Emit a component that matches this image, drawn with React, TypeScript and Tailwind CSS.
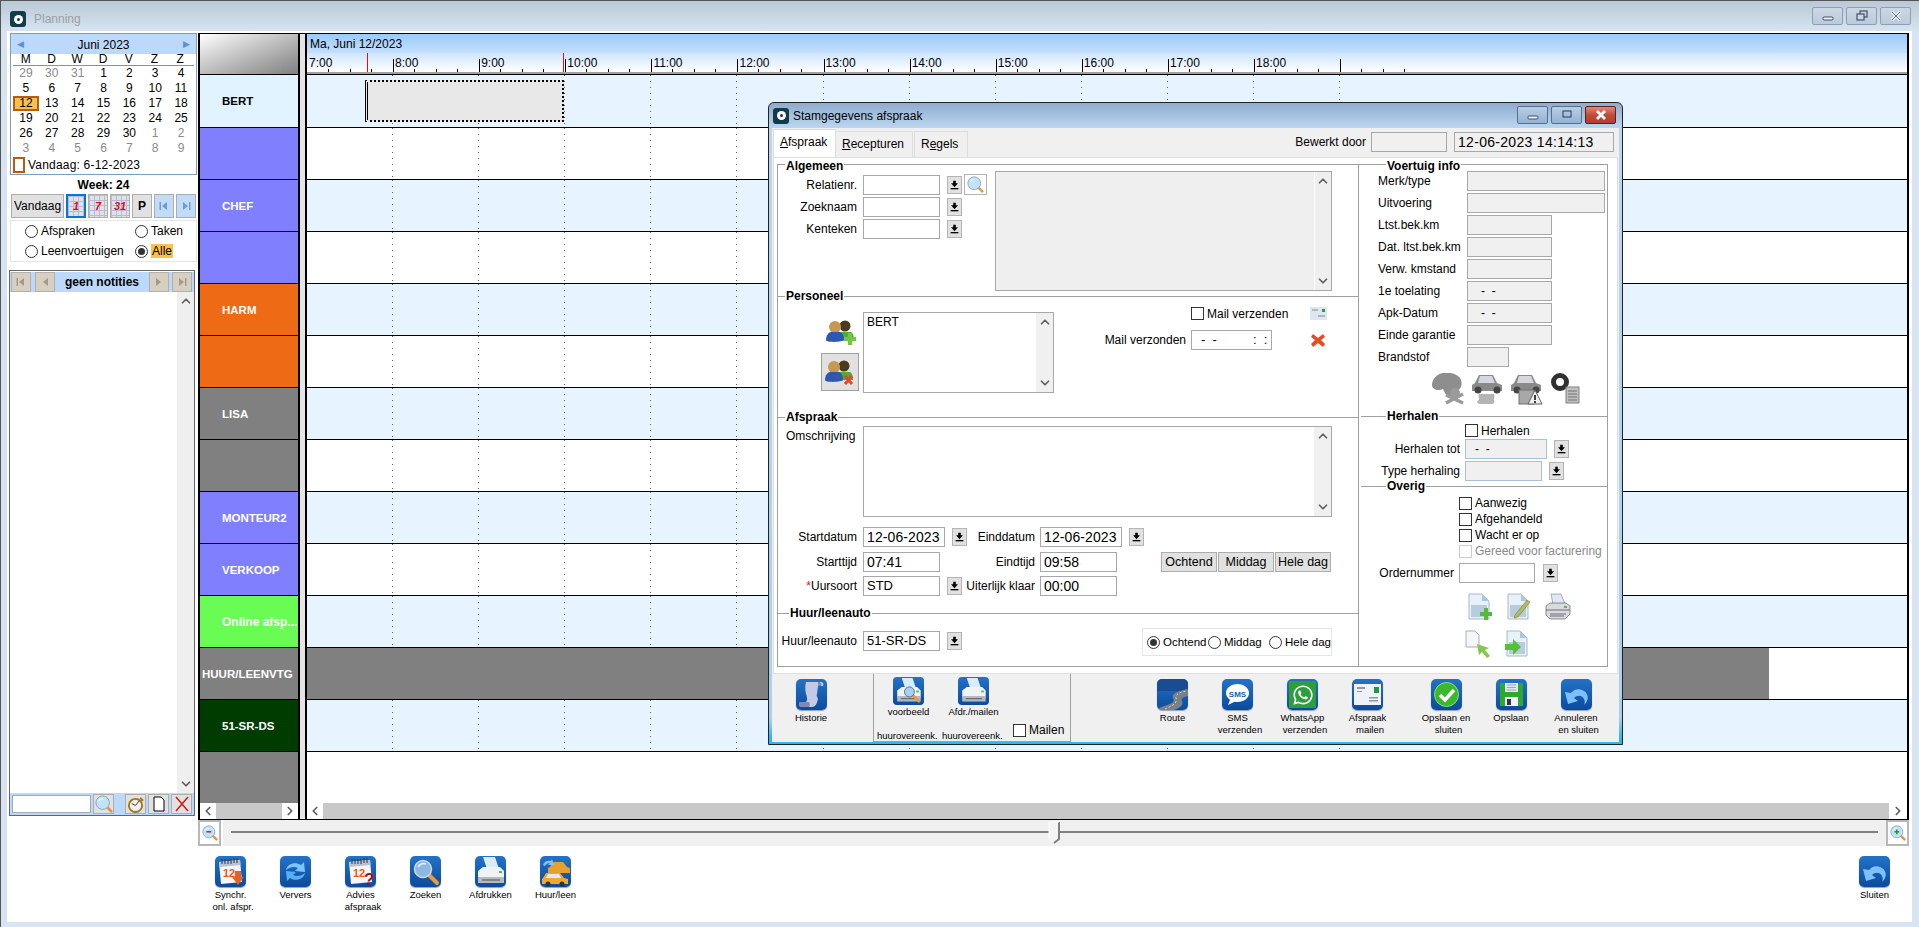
import type { ReactNode } from 'react'
import { ChevronUp, ChevronDown, ChevronLeft, ChevronRight } from 'lucide-react'
import { FaWhatsapp } from 'react-icons/fa'

const HOURS = ['7:00', '8:00', '9:00', '10:00', '11:00', '12:00', '13:00', '14:00', '15:00', '16:00', '17:00', '18:00', '']
const CAL_DAYS = [
  ['29', '30', '31', '1', '2', '3', '4'],
  ['5', '6', '7', '8', '9', '10', '11'],
  ['12', '13', '14', '15', '16', '17', '18'],
  ['19', '20', '21', '22', '23', '24', '25'],
  ['26', '27', '28', '29', '30', '1', '2'],
  ['3', '4', '5', '6', '7', '8', '9'],
]

const RESOURCES = [
  { name: 'BERT', cls: 'bg-[#e0f3ff] text-black pl-[22px]' },
  { name: '', cls: 'bg-[#8080ff]' },
  { name: 'CHEF', cls: 'bg-[#8080ff] text-white pl-[22px]' },
  { name: '', cls: 'bg-[#8080ff]' },
  { name: 'HARM', cls: 'bg-[#ee6a15] text-white pl-[22px]' },
  { name: '', cls: 'bg-[#ee6a15]' },
  { name: 'LISA', cls: 'bg-[#808080] text-white pl-[22px]' },
  { name: '', cls: 'bg-[#808080]' },
  { name: 'MONTEUR2', cls: 'bg-[#8080ff] text-white pl-[22px]' },
  { name: 'VERKOOP', cls: 'bg-[#8080ff] text-white pl-[22px]' },
  { name: 'Online afsp...', cls: 'bg-[#69fc55] text-white pl-[22px] text-[12px]' },
  { name: 'HUUR/LEENVTG', cls: 'bg-[#808080] text-white pl-[2px]' },
  { name: '51-SR-DS', cls: 'bg-[#003c00] text-white pl-[22px]' },
  { name: '', cls: 'bg-[#808080]' },
]

// ---------- small drawings ----------

const Tile = ({ children }: { children: ReactNode }) => (
  <div className="h-[31px] w-[31px] shrink-0 overflow-hidden rounded-[5px] bg-gradient-to-b from-[#2273c8] to-[#0d4a9c] shadow-[0_1px_1px_#8aa0b8]">
    {children}
  </div>
)

const CalendarArt = ({ mark }: { mark: 'down' | 'question' }) => (
  <svg viewBox="0 0 31 31" className="h-full w-full">
    <path d="M4 6l21-2 2 22-21 2z" fill="#f4f6fa" />
    <path d="M4 6l21-2 .5 5-21 2z" fill="#b9c2d0" />
    <path d="M7 3v5M10 3v5M13 3v5M16 3v5M19 2v5M22 2v5" stroke="#333" strokeWidth="1" />
    <text x="8" y="21" fontSize="11" fontWeight="bold" fill="#ee5a14" fontFamily="Liberation Sans">12</text>
    {mark === 'down' ? (
      <path d="M20 15h6v6h3l-6 8-6-8h3z" fill="#e8601c" />
    ) : (
      <text x="19" y="29" fontSize="17" fontWeight="bold" fill="#a01010" fontFamily="Liberation Sans">?</text>
    )}
  </svg>
)

const RefreshArt = () => (
  <svg viewBox="0 0 31 31" className="h-full w-full">
    <path d="M6 14c1-6 9-9 15-5l3-3 1 10-10-1 3-3c-4-2-8-1-12 2z" fill="#7cc4ff" />
    <path d="M25 17c-1 6-9 9-15 5l-3 3-1-10 10 1-3 3c4 2 8 1 12-2z" fill="#58aef4" />
  </svg>
)

const LensArt = () => (
  <svg viewBox="0 0 31 31" className="h-full w-full">
    <path d="M19 19l8 8" stroke="#e89a3c" strokeWidth="4" strokeLinecap="round" />
    <circle cx="13" cy="13" r="8.5" fill="#8fb8e0" stroke="#c8d8e8" strokeWidth="1.5" />
    <path d="M8 11c2-3 5-4 8-3" stroke="#e0eefa" strokeWidth="1.5" fill="none" />
  </svg>
)

const PrinterArt = ({ lens }: { lens?: boolean }) => (
  <svg viewBox="0 0 31 31" className="h-full w-full">
    <path d="M8 1h12l4 12H12z" fill="#d8ecfa" />
    <path d="M3 15l5-4h17l4 4v8H3z" fill="#f0f2f4" />
    <path d="M3 21h26v6H3z" fill="#b4bac0" />
    <path d="M7 24h18" stroke="#6a7078" strokeWidth="1.500" />
    <rect x="24" y="15" width="3" height="2" fill="#4cc04c" />
    {lens && (
      <g>
        <path d="M20 20l7 7" stroke="#e89a3c" strokeWidth="3" strokeLinecap="round" />
        <circle cx="16.500" cy="16.500" r="5.500" fill="#a8cef0" stroke="#506c8c" />
      </g>
    )}
  </svg>
)

const CarsArt = () => (
  <svg viewBox="0 0 31 31" className="h-full w-full">
    <path d="M10 11l3-5h10l4 5 3 1v5H8v-5z" fill="#e8a02c" />
    <path d="M3 22l3-5h14l4 5 4 1v5H2v-5z" fill="#f0a830" />
    <path d="M8 18h11l2 4H6z" fill="#dfeaf4" />
    <circle cx="8" cy="28" r="2.5" fill="#333" />
    <circle cx="22" cy="28" r="2.5" fill="#333" />
    <path d="M3 9c1-4 5-5 8-4l1-2 2 6-6 0 2-2c-2 0-4 1-5 3z" fill="#7cc4ff" />
  </svg>
)

const ScrollArt = () => (
  <svg viewBox="0 0 31 31" className="h-full w-full">
    <path d="M10 3h15c2 0 3 2 2 4h-5l-1 8c-1 2 1 4 1 5-1 5-3 8-6 8H6c-3 0-4-3-2-5h6c2-2 1-5 0-8-1-4-1-9 0-12z" fill="#c4cae4" />
    <path d="M4 23h9c1 2 1 4 0 5H6c-3 0-4-3-2-5z" fill="#8088b8" />
    <path d="M22 3c3 0 4 2 3 4h-3z" fill="#8088b8" />
  </svg>
)

const RoadArt = () => (
  <svg viewBox="0 0 31 31" className="h-full w-full">
    <rect width="31" height="12" fill="#1a4c94" />
    <path d="M0 31c6-6 20-5 16-12-2-4 4-7 15-9v7c-6 1-7 3-6 5 2 4-2 7-8 9z" fill="#7a8088" />
    <path d="M8 30c6-3 13-5 11-11-1-3 3-6 11-7" stroke="#ffffff" strokeWidth=".7" strokeDasharray="2 2" fill="none" />
  </svg>
)

const SmsArt = () => (
  <svg viewBox="0 0 31 31" className="h-full w-full">
    <path d="M4 14c0-5 5-9 11.500-9S27 9 27 14s-5 9-11.500 9c-1 0-2 0-3-.3L6 26l2-5c-2-2-4-4-4-7z" fill="#fff" />
    <text x="15.500" y="17.500" textAnchor="middle" fontSize="8" fontWeight="bold" fill="#1160b0" fontFamily="Liberation Sans">SMS</text>
  </svg>
)

const MailArt = () => (
  <svg viewBox="0 0 31 31" className="h-full w-full">
    <rect x="2" y="5" width="27" height="21" fill="#eef2f8" />
    <rect x="22" y="8" width="5" height="6" fill="#1e9a40" />
    <path d="M5 8h8v2H5zM5 12h5v1H5zM17 18h9v1.500h-9zM17 21h9v1.500h-9z" fill="#9098a8" />
  </svg>
)

const CheckArt = () => (
  <svg viewBox="0 0 31 31" className="h-full w-full">
    <circle cx="15.500" cy="15.500" r="12" fill="#3cb82c" stroke="#8ee070" />
    <path d="M9 16l5 5 9-10" stroke="#fff" strokeWidth="3.500" fill="none" />
  </svg>
)

const FloppyArt = () => (
  <svg viewBox="0 0 31 31" className="h-full w-full">
    <path d="M4 4h23v23H4z" fill="#2ea82e" />
    <rect x="9" y="4" width="13" height="9" fill="#dfe8f0" />
    <path d="M11 6h9M11 8.500h9M11 11h9" stroke="#a0a8b0" />
    <rect x="9" y="18" width="13" height="9" fill="#f0f4f8" />
    <rect x="11" y="20" width="4" height="6" fill="#303840" />
  </svg>
)

const UndoArt = () => (
  <svg viewBox="0 0 31 31" className="h-full w-full">
    <path d="M4 13l3 12 10-3-4-3c3-3 8-3 10 1 1 2 1 4 0 6 5-4 5-11 0-14-5-3-10-2-13 2z" fill="#7cc0ff" />
  </svg>
)

const Lens = ({ sign }: { sign?: 'plus' | 'minus' }) => (
  <svg viewBox="0 0 20 20" className="h-full w-full">
    <path d="M13 13l5 5" stroke="#e89440" strokeWidth="3" strokeLinecap="round" />
    <circle cx="8.500" cy="8.500" r="7.500" fill="#c4e2f6" stroke="#7ca4c8" />
    <path d="M4 7c1-2 3-3 5-3" stroke="#f0f8ff" strokeWidth="1.200" fill="none" />
    {sign && <path d="M5.500 8.500h6" stroke={sign === 'plus' ? '#10a010' : '#c01818'} strokeWidth="1.800" />}
    {sign === 'plus' && <path d="M8.500 5.500v6" stroke="#10a010" strokeWidth="1.800" />}
  </svg>
)

const DropIcon = () => (
  <svg viewBox="0 0 15 18" className="h-full w-full">
    <path d="M6 4h3v3h2.500L7.500 11.500 3.500 7H6z" fill="#000" />
    <rect x="3" y="12.500" width="9" height="1.500" fill="#000" />
  </svg>
)

const People = ({ mark }: { mark: 'add' | 'remove' }) => (
  <svg viewBox="0 0 30 26" className="h-[26px] w-[30px]">
    <circle cx="19" cy="7" r="5.500" fill="#4a3a20" />
    <path d="M13 13h12c2 1 3 4 3 8H12z" fill="#58a838" />
    <circle cx="9" cy="8" r="6" fill="#c89850" />
    <path d="M0 21c0-5 3-8 5-8h8c3 0 5 3 5 8 0 2-18 3-18 0z" fill="#2c58b0" />
    {mark === 'add' ? (
      <path d="M22 14h4v4h4v4h-4v4h-4v-4h-4v-4h4z" fill="#70c840" />
    ) : (
      <path d="M20 17l7 8M27 17l-7 8" stroke="#e04828" strokeWidth="3" />
    )}
  </svg>
)

const DocIcon = ({ mark }: { mark: 'plus' | 'pencil' | 'arrow' }) => (
  <svg viewBox="0 0 26 28" className="h-[28px] w-[26px]">
    <path d="M2 1h13l7 7v18H2z" fill="#e8f0f8" stroke="#a8b8c8" />
    <path d="M15 1v7h7z" fill="#a8c8e8" />
    <rect x="4" y="12" width="16" height="12" fill="#b8cce0" />
    {mark === 'plus' && <path d="M17 15h4v4h4v4h-4v4h-4v-4h-4v-4h4z" fill="#58b838" />}
    {mark === 'pencil' && <path d="M9 22l12-15 3 2-12 15-4 1z" fill="#98c860" stroke="#d04020" strokeWidth=".5" />}
    {mark === 'arrow' && <path d="M0 14h8v-5l8 8-8 8v-5H0z" fill="#58c038" />}
  </svg>
)

const CursorDoc = () => (
  <svg viewBox="0 0 27 28" className="h-[28px] w-[27px]">
    <path d="M1 1h9l4 4v12H1z" fill="#f4f6fa" stroke="#a8b0b8" />
    <path d="M12 14l12 4-4 2 5 6-3 2-5-6-3 3z" fill="#84c850" />
  </svg>
)

const GreyPrinter = () => (
  <svg viewBox="0 0 26 28" className="h-[28px] w-[26px]">
    <path d="M6 1h10l4 10H8z" fill="#e0e8f4" stroke="#8090a8" strokeWidth=".7" />
    <path d="M1 13l4-3h16l4 3v8l-5 5H5l-4-4z" fill="#d8dade" stroke="#606468" strokeWidth=".7" />
    <path d="M1 17h24M5 21h16M5 23h14" stroke="#686c70" />
    <rect x="19" y="13" width="3" height="2" fill="#4cc04c" />
  </svg>
)

const GreyCar = ({ extra }: { extra: 'scroll' | 'warn' }) => (
  <svg viewBox="0 0 32 32" className="h-[32px] w-[32px]">
    <path d="M3 10l4-8h14l4 8 5 2v6H0v-6z" fill="#8a8a8a" />
    <path d="M8 3h12l3 7H6z" fill="#d4d8dc" />
    <circle cx="6" cy="17" r="3.500" fill="#444" />
    <circle cx="25" cy="17" r="3.500" fill="#444" />
    {extra === 'scroll' ? (
      <path d="M7 21h15c1 2 0 4 0 6 1 2 0 4-3 4H8c-3 0-4-3-1-4 0-2-1-4 0-6z" fill="#b4b4b4" />
    ) : (
      <g>
        <rect x="8" y="17" width="15" height="14" fill="#a8a8a8" stroke="#707070" />
        <path d="M24 17l7 14H17z" fill="#f0f0f0" stroke="#606060" />
        <path d="M24 22v5M24 28v2" stroke="#000" strokeWidth="1.500" />
      </g>
    )}
  </svg>
)

const GreyTree = () => (
  <svg viewBox="0 0 33 32" className="h-[32px] w-[33px]">
    <path d="M0 12C0 6 5 1 11 0c7-1 16 1 18 7 2 5-1 11-6 12l-2 5-7-2-3-6c-4 2-11 1-11-4z" fill="#8e8e8e" />
    <path d="M14 22l17 8M31 21l-17 9" stroke="#9a9a9a" strokeWidth="3.500" />
    <circle cx="23" cy="20" r="5" fill="#9a9a9a" />
  </svg>
)

const TireDoc = () => (
  <svg viewBox="0 0 31 32" className="h-[32px] w-[31px]">
    <circle cx="10" cy="9" r="6.500" fill="none" stroke="#303030" strokeWidth="5" />
    <rect x="16" y="14" width="13" height="16" fill="#c0c0c0" stroke="#808080" />
    <path d="M18 18h9M18 21h9M18 24h9M18 27h9" stroke="#707070" />
  </svg>
)

// ---------- shared controls ----------

const Label = ({ children, className }: { children: ReactNode; className: string }) => (
  <div className={`shrink-0 whitespace-nowrap text-right ${className}`}>{children}</div>
)

const Box = ({ children, className }: { children?: ReactNode; className: string }) => (
  <div className={`flex h-[20px] shrink-0 items-center overflow-hidden whitespace-pre border border-[#a8a8a8] px-[3px] ${className}`}>
    {children}
  </div>
)

const Drop = ({ className = '' }: { className?: string }) => (
  <div className={`h-[18px] w-[15px] shrink-0 border border-[#b4b4b4] bg-[#e1e1e1] ${className}`}>
    <DropIcon />
  </div>
)

const Check = ({ label, disabled, className = '' }: { label: string; disabled?: boolean; className?: string }) => (
  <div className={`flex items-center ${className}`}>
    <div className={`h-[13px] w-[13px] shrink-0 border bg-white ${disabled ? 'border-[#cccccc]' : 'border-[#333333]'}`} />
    <span className={`ml-[3px] whitespace-nowrap ${disabled ? 'text-[#8a8a8a]' : ''}`}>{label}</span>
  </div>
)

const Radio = ({ checked }: { checked?: boolean }) => (
  <div className="flex h-[13px] w-[13px] shrink-0 items-center justify-center rounded-full border border-[#333333] bg-white">
    {checked && <div className="h-[7px] w-[7px] rounded-full bg-[#333333]" />}
  </div>
)

const ScrollCol = ({ className = '' }: { className?: string }) => (
  <div className={`flex w-[17px] flex-col items-center justify-between py-[2px] ${className}`}>
    <ChevronUp size={14} strokeWidth={3} color="#606060" />
    <ChevronDown size={14} strokeWidth={3} color="#606060" />
  </div>
)

const Legend = ({ children, className }: { children: ReactNode; className: string }) => (
  <span className={`absolute whitespace-nowrap bg-white px-px font-bold leading-[14px] ${className}`}>{children}</span>
)

const Tool = ({ icon, lines, className = '' }: { icon: ReactNode; lines: string[]; className?: string }) => (
  <div className={`flex shrink-0 flex-col items-center ${className}`}>
    <Tile>{icon}</Tile>
    <div className="mt-[2px] text-center text-[9.500px] leading-[12px]">
      {lines.map((line, i) => (
        <div key={line} className={i > 0 ? 'pl-[5px]' : ''}>
          {line}
        </div>
      ))}
    </div>
  </div>
)

const WinButton = ({ kind, dialog }: { kind: 'min' | 'max' | 'restore' | 'close'; dialog?: boolean }) => {
  const red = dialog && kind === 'close'
  const base = dialog
    ? red
      ? 'from-[#dc8c7a] via-[#c04a36] to-[#b04030] border-[#5c2018]'
      : 'from-[#b8cee6] to-[#94b2d4] border-[#55708f]'
    : 'from-[#cbd7e4] to-[#bccad9] border-[#8d9fb8]'
  return (
    <div className={`flex h-[18px] w-[31px] items-center justify-center rounded-[2px] border bg-gradient-to-b ${base}`}>
      <svg viewBox="0 0 14 12" className="h-[12px] w-[14px]">
        {kind === 'min' && <rect x="2" y="7" width="10" height="3" rx="1" fill="#eef2f6" stroke="#40506c" />}
        {kind === 'max' && <rect x="3" y="2" width="8" height="6" fill="none" stroke="#40506c" strokeWidth="1.200" />}
        {kind === 'restore' && (
          <g fill="none" stroke="#40506c" strokeWidth="1.200">
            <rect x="5" y="1" width="7" height="6" />
            <rect x="2" y="4" width="7" height="6" fill="#cbd7e4" />
          </g>
        )}
        {kind === 'close' && (
          <path d="M3 2l8 8M11 2l-8 8" stroke={red ? '#ffffff' : '#eef2f6'} strokeWidth="2.800" />
        )}
        {kind === 'close' && !red && <path d="M3 2l8 8M11 2l-8 8" stroke="#5a6a84" strokeWidth="1" />}
      </svg>
    </div>
  )
}

const Logo = () => (
  <div className="flex h-[16px] w-[16px] items-center justify-center rounded-[3px] bg-[#123c48]">
    <div className="flex h-[9px] w-[9px] items-center justify-center rounded-full bg-white">
      <div className="h-[3px] w-[3px] rounded-full bg-[#123c48]" />
    </div>
  </div>
)

// ---------- left column ----------

const Calendar = () => (
  <div className="h-[142px] w-[187px] border border-[#7f9db9]">
    <div className="flex h-[20px] items-center justify-between bg-[#bcd9fb] px-[6px]">
      <span className="text-[9px] text-[#5b8fd0]">◀</span>
      <span className="pt-[2px]">Juni 2023</span>
      <span className="text-[9px] text-[#5b8fd0]">▶</span>
    </div>
    <div className="mx-[2px] grid h-[12px] grid-cols-7 border-b border-[#5c9ad8] pr-[1px] text-center leading-[11px]">
      {['M', 'D', 'W', 'D', 'V', 'Z', 'Z'].map((d, i) => (
        <div key={i}>{d}</div>
      ))}
    </div>
    {CAL_DAYS.map((week, r) => (
      <div key={r} className="mx-[2px] grid h-[15px] grid-cols-7 text-center leading-[15px]">
        {week.map((d, c) => {
          const faded = (r === 0 && c < 3) || (r === 4 && c > 4) || r === 5
          const today = d === '12'
          return (
            <div
              key={c}
              className={today ? 'border-2 border-[#b85c10] bg-[#f8c04c] leading-[11px]' : faded ? 'text-[#8a8a8a]' : ''}
            >
              {d}
            </div>
          )
        })}
      </div>
    ))}
    <div className="ml-[2px] mt-[1px] flex h-[16px] items-center">
      <div className="h-[16px] w-[12px] border-2 border-[#b85c10] bg-white" />
      <span className="ml-[3px] tracking-[0.2px]">Vandaag: 6-12-2023</span>
    </div>
  </div>
)

const ViewBtn = ({ n, focus }: { n: string; focus?: boolean }) => (
  <div
    className={`flex h-[24px] w-[20px] items-center justify-center bg-[#e1e1e1] bg-[linear-gradient(#b8b8e0_1px,transparent_1px),linear-gradient(90deg,#b8b8e0_1px,transparent_1px)] bg-[size:5px_5px] text-[11px] font-bold italic text-[#d01020] ${
      focus ? 'border-2 border-[#0078d7]' : 'border border-[#adadad]'
    }`}
  >
    {n}
  </div>
)

const Triangle = ({ dir, bar, color }: { dir: 'l' | 'r'; bar?: boolean; color: string }) => (
  <svg viewBox="0 0 12 12" className="h-[12px] w-[12px]">
    <path d={dir === 'l' ? 'M9 2v8L4 6z' : 'M3 2v8l5-4z'} fill={color} />
    {bar && <rect x={dir === 'l' ? 1.5 : 9} y="2" width="1.500" height="8" fill={color} />}
  </svg>
)

const NoteNav = ({ dir, bar }: { dir: 'l' | 'r'; bar?: boolean }) => (
  <div className="flex h-[20px] w-[20px] items-center justify-center border border-[#b0b0b0] bg-[#d8cfc0]">
    <Triangle dir={dir} bar={bar} color="#a39a8a" />
  </div>
)

const SmallBtn = ({ children }: { children: ReactNode }) => (
  <div className="flex h-[20px] w-[21px] items-center justify-center border border-[#adadad] bg-[#e1e1e1]">{children}</div>
)

const LeftPanel = () => (
  <div className="flex w-[191px] shrink-0 flex-col pl-[3px]">
    <Calendar />
    <div className="flex h-[19px] w-[187px] items-center justify-center font-bold">Week: 24</div>
    <div className="ml-px flex h-[24px] items-stretch gap-[2px]">
      <div className="flex w-[53px] items-center justify-center border border-[#adadad] bg-[#e1e1e1]">Vandaag</div>
      <ViewBtn n="1" focus />
      <ViewBtn n="7" />
      <ViewBtn n="31" />
      <div className="flex w-[20px] items-center justify-center border border-[#adadad] bg-[#e1e1e1] font-bold">P</div>
      <div className="flex w-[20px] items-center justify-center border border-[#adadad] bg-[#c2dcf8]">
        <Triangle dir="l" bar color="#6a9ed8" />
      </div>
      <div className="flex w-[20px] items-center justify-center border border-[#adadad] bg-[#c2dcf8]">
        <Triangle dir="r" bar color="#6a9ed8" />
      </div>
    </div>
    <div className="mt-[2px] flex h-[42px] w-[187px] flex-col justify-center gap-[7px] border border-[#e5e5e5] pl-[14px]">
      <div className="flex h-[13px] items-center">
        <Radio />
        <span className="ml-[3px] w-[94px]">Afspraken</span>
        <Radio />
        <span className="ml-[3px]">Taken</span>
      </div>
      <div className="flex h-[13px] items-center">
        <Radio />
        <span className="ml-[3px] w-[94px] whitespace-nowrap">Leenvoertuigen</span>
        <Radio checked />
        <span className="ml-[3px] bg-[#fbc04a] px-px">Alle</span>
      </div>
    </div>
    <div className="-ml-px mt-[8px] flex h-[546px] w-[186px] flex-col border border-[#666666]">
      <div className="mt-px flex h-[20px] shrink-0 items-center bg-[#bcd9fb] pl-px pr-[2px]">
        <NoteNav dir="l" bar />
        <div className="ml-[4px]">
          <NoteNav dir="l" />
        </div>
        <div className="flex-1 text-center font-bold">geen notities</div>
        <NoteNav dir="r" />
        <div className="ml-[3px]">
          <NoteNav dir="r" bar />
        </div>
      </div>
      <div className="flex flex-1 justify-end">
        <ScrollCol className="bg-[#efefef]" />
      </div>
      <div className="flex h-[22px] shrink-0 items-center bg-[#bcd9fb] pl-[2px]">
        <div className="h-[18px] w-[79px] border border-[#a8a8a8] bg-white" />
        <div className="ml-[2px]">
          <SmallBtn>
            <div className="h-[18px] w-[18px]">
              <Lens />
            </div>
          </SmallBtn>
        </div>
        <div className="ml-[11px]">
          <SmallBtn>
            <svg viewBox="0 0 18 18" className="h-[17px] w-[17px]">
              <circle cx="9" cy="10" r="7" fill="#f0f0f0" stroke="#a07818" strokeWidth="2" />
              <path d="M9 10l4-5M9 10L5 8" stroke="#303030" />
              <path d="M14 2l3 3" stroke="#a07818" strokeWidth="2" />
            </svg>
          </SmallBtn>
        </div>
        <div className="ml-[2px]">
          <SmallBtn>
            <svg viewBox="0 0 14 16" className="h-[16px] w-[14px]">
              <path d="M2 1h7l3 3v11H2z" fill="#fff" stroke="#000" />
            </svg>
          </SmallBtn>
        </div>
        <div className="ml-[2px]">
          <SmallBtn>
            <svg viewBox="0 0 16 16" className="h-[16px] w-[16px]">
              <path d="M2 1l12 14M14 1L2 15" stroke="#d01818" strokeWidth="1.500" />
            </svg>
          </SmallBtn>
        </div>
      </div>
    </div>
  </div>
)

// ---------- schedule ----------

const HourRuler = () => (
  <div className="relative flex h-[21px] border-b-2 border-b-[#a0a0a0] bg-gradient-to-b from-[#cfe5fd] to-white">
    {HOURS.map((h, i) => (
      <div key={i} className="relative h-full w-[86.100px] shrink-0">
        {i > 0 && <div className="absolute bottom-0 left-0 top-[6px] w-px bg-black" />}
        <span className="absolute left-[2px] top-[3px] leading-[14px]">{h}</span>
        <div className="absolute bottom-0 left-[21px] h-[3px] w-px bg-black" />
        <div className="absolute bottom-0 left-[43px] h-[3px] w-px bg-black" />
        <div className="absolute bottom-0 left-[64px] h-[3px] w-px bg-black" />
      </div>
    ))}
    <div className="absolute left-[60px] top-0 h-full w-px bg-[#d01818]" />
    <div className="absolute left-[256px] top-0 h-full w-px bg-[#d01818]" />
  </div>
)

const HourDots = () => (
  <>
    {HOURS.slice(0, 12).map((_, i) => (
      <div key={i} className="flex h-full w-[86.100px] shrink-0 justify-end">
        <div className="h-full w-px bg-[repeating-linear-gradient(to_bottom,#666666_0,#666666_1px,transparent_1px,transparent_6px)]" />
      </div>
    ))}
  </>
)

const rowHeight = (i: number) => (i === 0 ? 'h-[53px]' : i === RESOURCES.length - 1 ? 'h-[51px]' : 'h-[52px]')

const Schedule = () => (
  <div className="flex h-[787px] w-[1711px] shrink-0 border-y border-black">
    <div className="flex w-[102px] shrink-0 flex-col border-x-2 border-black">
      <div className="h-[41px] shrink-0 border-b border-black bg-gradient-to-br from-white to-[#808080]" />
      {RESOURCES.map((r, i) => (
        <div
          key={i}
          className={`flex shrink-0 items-center overflow-hidden whitespace-nowrap text-[11.500px] font-bold ${rowHeight(i)} ${r.cls} ${
            i < RESOURCES.length - 1 ? 'border-b border-black' : ''
          }`}
        >
          {r.name}
        </div>
      ))}
      <div className="flex h-[16px] shrink-0 items-center justify-between bg-white">
        <ChevronLeft size={14} strokeWidth={3} color="#606060" className="ml-px" />
        <div className="h-full w-[66px] bg-[#c8c8c8]" />
        <ChevronRight size={14} strokeWidth={3} color="#606060" className="mr-px" />
      </div>
    </div>
    <div className="w-[7px] shrink-0 border-r-2 border-black bg-[#e4e4e4]" />
    <div className="flex min-w-0 flex-1 flex-col border-r-2 border-black">
      <div className="flex h-[19px] shrink-0 items-center bg-gradient-to-b from-[#9ccafc] to-[#c4dffc] pl-[3px]">
        Ma, Juni 12/2023
      </div>
      <HourRuler />
      <div className="h-px shrink-0 bg-black" />
      {RESOURCES.map((r, i) => (
        <div
          key={i}
          className={`relative flex shrink-0 ${rowHeight(i)} ${i % 2 === 0 && i !== 13 ? 'bg-[#e7f4ff]' : 'bg-white'} ${
            i < RESOURCES.length - 1 ? 'border-b border-black' : ''
          }`}
        >
          {i === 11 ? <div className="h-full w-[1462px] bg-[#808080]" /> : i < 13 ? <HourDots /> : null}
          {i === 0 && (
            <div className="absolute left-[58px] top-[5px] h-[42px] w-[199px] border-2 border-l-[3px] border-dotted border-black bg-[#e8e8e8] [border-left-style:double]" />
          )}
        </div>
      ))}
      <div className="flex h-[16px] shrink-0 items-center bg-white">
        <ChevronLeft size={14} strokeWidth={3} color="#606060" className="ml-px" />
        <div className="ml-[1px] h-full flex-1 bg-[#c8c8c8]" />
        <ChevronRight size={14} strokeWidth={3} color="#606060" className="mx-[2px]" />
      </div>
    </div>
  </div>
)

const ZoomBar = () => (
  <div className="ml-[191px] flex h-[26px] w-[1711px] shrink-0">
    <div className="flex w-[23px] items-center justify-center border-2 border-[#b8b8b8] bg-white">
      <div className="h-[16px] w-[16px]">
        <Lens sign="minus" />
      </div>
    </div>
    <div className="ml-[2px] flex flex-1 items-center bg-[#f0f0f0] px-[8px] pb-[2px]">
      <div className="relative h-[2px] w-full bg-[#808080]">
        <svg viewBox="0 0 12 23" className="absolute -top-[10px] left-[817px] h-[23px] w-[12px]">
          <path d="M1 1h10v17l-5 4-5-4z" fill="#f4f4f4" />
          <path d="M11 1v17l-5 4" fill="none" stroke="#808080" strokeWidth="2" />
          <path d="M1 18V1h10" fill="none" stroke="#ffffff" />
        </svg>
      </div>
    </div>
    <div className="flex w-[23px] items-center justify-center border-2 border-[#b8b8b8] bg-white">
      <div className="h-[16px] w-[16px]">
        <Lens sign="plus" />
      </div>
    </div>
  </div>
)

const BottomBar = () => (
  <div className="flex flex-1 items-start pl-[191px] pt-[10px]">
    <Tool className="w-[65px]" icon={<CalendarArt mark="down" />} lines={['Synchr.', 'onl. afspr.']} />
    <Tool className="w-[65px]" icon={<RefreshArt />} lines={['Ververs']} />
    <Tool className="w-[65px]" icon={<CalendarArt mark="question" />} lines={['Advies', 'afspraak']} />
    <Tool className="w-[65px]" icon={<LensArt />} lines={['Zoeken']} />
    <Tool className="w-[65px]" icon={<PrinterArt />} lines={['Afdrukken']} />
    <Tool className="w-[65px]" icon={<CarsArt />} lines={['Huur/leen']} />
    <Tool className="ml-auto mr-[5px] w-[65px]" icon={<UndoArt />} lines={['Sluiten']} />
  </div>
)

// ---------- dialog ----------

const Algemeen = () => (
  <section className="relative flex h-[131px] pt-[6px]">
    <Legend className="-top-[6px] left-[7px]">Algemeen</Legend>
    <div className="flex w-[217px] shrink-0 flex-col gap-[2px] pt-[3px]">
      {['Relatienr.', 'Zoeknaam', 'Kenteken'].map((l, i) => (
        <div key={l} className="flex items-center">
          <Label className="w-[79px]">{l}</Label>
          <Box className="ml-[6px] w-[77px] bg-white" />
          <Drop className="ml-[7px]" />
          {i === 0 && (
            <div className="ml-[2px] h-[21px] w-[23px] border border-[#b4b4b4] bg-white p-px">
              <Lens />
            </div>
          )}
        </div>
      ))}
    </div>
    <div className="flex h-[120px] w-[337px] justify-end border border-[#a8a8a8] bg-[#efefef]">
      <ScrollCol className="border-l border-white" />
    </div>
  </section>
)

const Personeel = () => (
  <section className="relative flex h-[121px] border-t border-[#a0a0a0]">
    <Legend className="-top-[8px] left-[7px]">Personeel</Legend>
    <div className="flex w-[85px] shrink-0 flex-col items-end pr-[4px] pt-[22px]">
      <div className="mr-[3px]">
        <People mark="add" />
      </div>
      <div className="mt-[8px] flex h-[38px] w-[38px] items-center justify-center border border-[#a0a0a0] bg-[#e1e1e1]">
        <People mark="remove" />
      </div>
    </div>
    <div className="mt-[15px] flex h-[81px] w-[191px] shrink-0 justify-between border border-[#a8a8a8] bg-white pl-[3px] pt-[2px]">
      <span>BERT</span>
      <ScrollCol className="-mt-[2px] bg-[#f0f0f0]" />
    </div>
    <div className="flex-1 pt-[10px]">
      <div className="flex h-[13px] items-center pl-[137px]">
        <Check label="Mail verzenden" className="w-[119px]" />
        <svg viewBox="0 0 17 13" className="h-[13px] w-[17px]">
          <rect width="17" height="13" fill="#dfe6f0" />
          <rect x="12" y="2" width="3" height="3" fill="#28a040" />
          <path d="M2 3h6M8 9h7" stroke="#a0a8b8" strokeWidth="1.500" />
        </svg>
      </div>
      <div className="mt-[10px] flex items-center">
        <Label className="w-[132px]">Mail verzonden</Label>
        <Box className="ml-[5px] w-[81px] bg-white pl-[9px] text-[13px]">{'-  -          :  :'}</Box>
        <svg viewBox="0 0 16 16" className="ml-[38px] h-[16px] w-[16px]">
          <path d="M3 2l5 4 5-4 2 3-4 3 4 4-2 3-5-4-5 4-2-3 4-4-4-3z" fill="#e84c24" />
        </svg>
      </div>
    </div>
  </section>
)

const Afspraak = () => (
  <section className="relative h-[196px] border-t border-[#a0a0a0] pt-[8px]">
    <Legend className="-top-[8px] left-[7px]">Afspraak</Legend>
    <div className="flex">
      <div className="w-[85px] shrink-0 pl-[8px] pt-[3px]">Omschrijving</div>
      <div className="flex h-[91px] w-[469px] justify-end border border-[#a8a8a8] bg-white">
        <ScrollCol className="bg-[#f0f0f0]" />
      </div>
    </div>
    <div className="mt-[10px] flex items-center">
      <Label className="w-[79px]">Startdatum</Label>
      <Box className="ml-[6px] w-[82px] bg-white text-[14px] tracking-[0.1px]">12-06-2023</Box>
      <Drop className="ml-[7px]" />
      <Label className="w-[68px]">Einddatum</Label>
      <Box className="ml-[5px] w-[82px] bg-white text-[14px] tracking-[0.1px]">12-06-2023</Box>
      <Drop className="ml-[7px]" />
    </div>
    <div className="mt-[4px] flex items-center">
      <Label className="w-[79px]">Starttijd</Label>
      <Box className="ml-[6px] w-[77px] bg-white text-[14px]">07:41</Box>
      <Label className="w-[95px]">Eindtijd</Label>
      <Box className="ml-[5px] w-[77px] bg-white text-[14px]">09:58</Box>
      <div className="ml-[44px] mt-px flex gap-px">
        {['Ochtend', 'Middag', 'Hele dag'].map((l) => (
          <div key={l} className="flex h-[20px] w-[56px] items-center justify-center border border-[#adadad] bg-[#e1e1e1] text-[12.500px]">
            {l}
          </div>
        ))}
      </div>
    </div>
    <div className="mt-[4px] flex items-center">
      <Label className="w-[79px]">
        <span className="text-[#d01818]">*</span>Uursoort
      </Label>
      <Box className="ml-[6px] w-[77px] bg-white text-[13px]">STD</Box>
      <Drop className="ml-[7px]" />
      <Label className="w-[73px]">Uiterlijk klaar</Label>
      <Box className="ml-[5px] w-[77px] bg-white text-[14px]">00:00</Box>
    </div>
  </section>
)

const HuurLeen = () => (
  <section className="relative flex flex-1 items-start border-t border-[#a0a0a0] pt-[17px]">
    <Legend className="-top-[8px] left-[11px]">Huur/leenauto</Legend>
    <Label className="w-[79px] pt-[3px]">Huur/leenauto</Label>
    <Box className="ml-[6px] w-[77px] bg-white text-[13px]">51-SR-DS</Box>
    <Drop className="ml-[7px] mt-px" />
    <div className="-mt-[3px] ml-[180px] flex h-[28px] w-[190px] items-center border border-[#e5e5e5] pl-[4px]">
      <Radio checked />
      <span className="ml-[3px] w-[45px] text-[11.500px]">Ochtend</span>
      <Radio />
      <span className="ml-[3px] w-[45px] text-[11.500px]">Middag</span>
      <Radio />
      <span className="ml-[3px] text-[11.500px]">Hele dag</span>
    </div>
  </section>
)

const VoertuigInfo = () => (
  <section className="relative h-[251px] pl-[19px] pt-[6px]">
    <Legend className="-top-[6px] left-[27px]">Voertuig info</Legend>
    <div className="flex flex-col gap-[2px]">
      {[
        ['Merk/type', 'w-[138px]', ''],
        ['Uitvoering', 'w-[138px]', ''],
        ['Ltst.bek.km', 'w-[85px]', ''],
        ['Dat. ltst.bek.km', 'w-[85px]', ''],
        ['Verw. kmstand', 'w-[85px]', ''],
        ['1e toelating', 'w-[85px]', '   -  -'],
        ['Apk-Datum', 'w-[85px]', '   -  -'],
        ['Einde garantie', 'w-[85px]', ''],
        ['Brandstof', 'w-[42px]', ''],
      ].map(([label, width, value]) => (
        <div key={label} className="flex items-center">
          <div className="w-[89px] shrink-0 whitespace-nowrap">{label}</div>
          <Box className={`bg-[#f0f0f0] ${width}`}>{value}</Box>
        </div>
      ))}
    </div>
    <div className="ml-[54px] mt-[6px] flex items-start gap-[7px]">
      <GreyTree />
      <GreyCar extra="scroll" />
      <GreyCar extra="warn" />
      <TireDoc />
    </div>
  </section>
)

const Herhalen = () => (
  <section className="relative ml-[2px] h-[70px] border-t border-[#a0a0a0] pt-[7px]">
    <Legend className="-top-[8px] left-[25px]">Herhalen</Legend>
    <Check label="Herhalen" className="ml-[104px] h-[13px]" />
    <div className="mt-[2px] flex items-center">
      <Label className="w-[99px]">Herhalen tot</Label>
      <Box className="ml-[5px] w-[82px] border-[#a8c0d8] bg-[#f0f0f0] pl-[9px]">{'-  -'}</Box>
      <Drop className="ml-[7px]" />
    </div>
    <div className="mt-[2px] flex items-center">
      <Label className="w-[99px]">Type herhaling</Label>
      <Box className="ml-[5px] w-[77px] border-[#a8c0d8] bg-[#f0f0f0]" />
      <Drop className="ml-[7px]" />
    </div>
  </section>
)

const Overig = () => (
  <section className="relative ml-[2px] flex-1 border-t border-[#a0a0a0] pt-[8px]">
    <Legend className="-top-[8px] left-[25px]">Overig</Legend>
    <div className="ml-[98px] flex flex-col">
      <Check label="Aanwezig" className="h-[16px]" />
      <Check label="Afgehandeld" className="h-[16px]" />
      <Check label="Wacht er op" className="h-[16px]" />
      <Check label="Gereed voor facturering" disabled className="h-[16px]" />
    </div>
    <div className="mt-[4px] flex items-center">
      <Label className="w-[93px]">Ordernummer</Label>
      <Box className="ml-[5px] w-[76px] bg-white" />
      <Drop className="ml-[8px]" />
    </div>
    <div className="ml-[106px] mt-[10px] flex gap-[13px]">
      <DocIcon mark="plus" />
      <DocIcon mark="pencil" />
      <GreyPrinter />
    </div>
    <div className="ml-[104px] mt-[9px] flex gap-[13px]">
      <CursorDoc />
      <DocIcon mark="arrow" />
    </div>
  </section>
)

const Dialog = () => (
  <div className="absolute left-[767px] top-[102px] flex h-[643px] w-[855px] flex-col rounded-t-[6px] border border-[#222222] bg-[linear-gradient(#8eacd0_0,#bcd6ee_25px,#a8d0ec_96%,#30b8e8_99%)] px-[3px] pb-[2px]">
    <div className="flex h-[25px] shrink-0 items-center pr-[3px]">
      <div className="ml-[1px]">
        <Logo />
      </div>
      <span className="ml-[4px]">Stamgegevens afspraak</span>
      <div className="ml-auto flex gap-[3px] pb-[2px]">
        <WinButton kind="min" dialog />
        <WinButton kind="max" dialog />
        <WinButton kind="close" dialog />
      </div>
    </div>
    <div className="flex min-h-0 flex-1 flex-col bg-[#f0f0f0]">
      <div className="flex h-[29px] shrink-0 items-end pl-px">
        <div className="h-[28px] w-[63px] border-x border-t border-[#dddddd] bg-white pl-[6px] pt-[5px]">
          <u>A</u>fspraak
        </div>
        <div className="h-[26px] w-[77px] border-r border-t border-[#dddddd] pl-[6px] pt-[5px]">
          <u>R</u>ecepturen
        </div>
        <div className="ml-px h-[26px] w-[54px] border-x border-t border-[#dddddd] pl-[6px] pt-[5px]">
          R<u>e</u>gels
        </div>
        <div className="ml-auto flex h-full items-center pb-[4px] pr-[5px] pt-[2px]">
          <span>Bewerkt door</span>
          <Box className="ml-[5px] w-[76px] bg-[#f0f0f0]" />
          <Box className="ml-[7px] w-[160px] bg-[#f0f0f0] text-[14px] tracking-[0.3px]">12-06-2023 14:14:13</Box>
        </div>
      </div>
      <div className="mx-px h-[517px] shrink-0 border border-[#e0e0e0] bg-white px-[3px] pt-[6px]">
        <div className="flex h-[503px] w-[831px] border border-[#a0a0a0]">
          <div className="flex w-[581px] shrink-0 flex-col border-r border-[#a0a0a0]">
            <Algemeen />
            <Personeel />
            <Afspraak />
            <HuurLeen />
          </div>
          <div className="flex flex-1 flex-col">
            <VoertuigInfo />
            <Herhalen />
            <Overig />
          </div>
        </div>
      </div>
      <div className="flex flex-1 items-start">
        <Tool className="w-[78px] pt-[5px]" icon={<ScrollArt />} lines={['Historie']} />
        <div className="ml-[23px] flex h-[68px] w-[198px] shrink-0 flex-col border-x border-b border-[#a0a0a0]">
          <div className="flex pl-[2px] pt-[3px]">
            <div className="flex w-[65px] flex-col items-center">
              <div className="h-[28px] w-[31px] overflow-hidden rounded-[4px] bg-gradient-to-b from-[#2273c8] to-[#0d4a9c]">
                <PrinterArt lens />
              </div>
              <span className="mt-[1px] text-[9.500px] leading-[12px]">voorbeeld</span>
            </div>
            <div className="flex w-[65px] flex-col items-center">
              <div className="h-[28px] w-[31px] overflow-hidden rounded-[4px] bg-gradient-to-b from-[#2273c8] to-[#0d4a9c]">
                <PrinterArt />
              </div>
              <span className="mt-[1px] text-[9.500px] leading-[12px]">Afdr./mailen</span>
            </div>
          </div>
          <div className="-mb-px mt-auto flex items-end pl-[3px]">
            <span className="w-[65px] text-[9.500px] leading-[12px]">huurovereenk.</span>
            <span className="w-[71px] text-[9.500px] leading-[12px]">huurovereenk.</span>
            <Check label="Mailen" className="mb-[5px]" />
          </div>
        </div>
        <Tool className="ml-[69px] w-[65px] pt-[5px]" icon={<RoadArt />} lines={['Route']} />
        <Tool className="w-[65px] pt-[5px]" icon={<SmsArt />} lines={['SMS', 'verzenden']} />
        <Tool
          className="w-[65px] pt-[5px]"
          icon={
            <div className="m-[2px] flex h-[27px] w-[27px] items-center justify-center bg-[#2e9e3c]">
              <FaWhatsapp size={22} color="#ffffff" />
            </div>
          }
          lines={['WhatsApp', 'verzenden']}
        />
        <Tool className="w-[65px] pt-[5px]" icon={<MailArt />} lines={['Afspraak', 'mailen']} />
        <Tool className="ml-[7px] w-[78px] pt-[5px]" icon={<CheckArt />} lines={['Opslaan en', 'sluiten']} />
        <Tool className="w-[52px] pt-[5px]" icon={<FloppyArt />} lines={['Opslaan']} />
        <Tool className="w-[78px] pt-[5px]" icon={<UndoArt />} lines={['Annuleren', 'en sluiten']} />
      </div>
    </div>
  </div>
)

export default function App() {
  return (
    <div className="relative flex h-[927px] w-[1919px] flex-col overflow-hidden border-l border-[#555555] bg-[#d8e4f1] text-[12px] leading-[14px] text-black [font-family:'Liberation_Sans',Arial,sans-serif]">
      <div className="h-px shrink-0 bg-[#555555]" />
      <div className="flex h-[30px] shrink-0 items-center bg-gradient-to-b from-[#bbc9d7] to-[#d6e3f0] pl-[9px] pr-[8px] pt-[6px]">
        <Logo />
        <span className="ml-[8px] text-[#a0a0a0]">Planning</span>
        <div className="mb-[7px] ml-auto flex gap-[3px]">
          <WinButton kind="min" />
          <WinButton kind="restore" />
          <WinButton kind="close" />
        </div>
      </div>
      <div className="mb-[5px] ml-[6px] mr-[7px] flex flex-1 flex-col bg-white">
        <div className="flex pt-[2px]">
          <LeftPanel />
          <Schedule />
        </div>
        <ZoomBar />
        <BottomBar />
      </div>
      <Dialog />
    </div>
  )
}
